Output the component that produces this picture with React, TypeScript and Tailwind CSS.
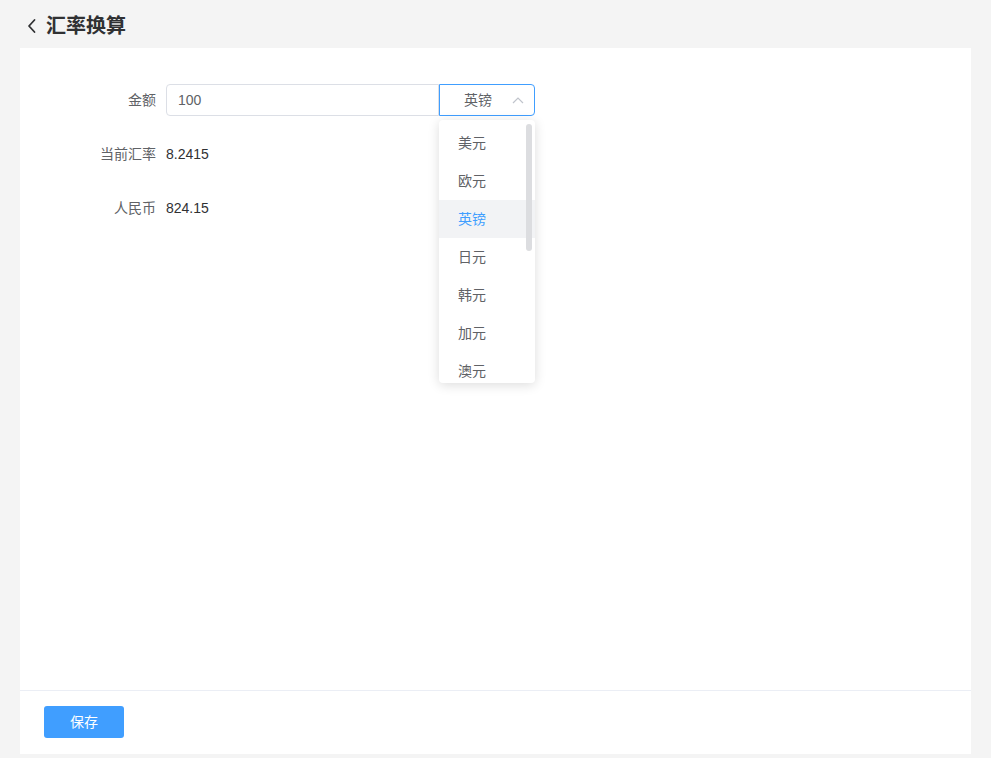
import React, { useState } from 'react';

const currencies = ['美元', '欧元', '英镑', '日元', '韩元', '加元', '澳元'];

const App: React.FC = () => {
  const [amount, setAmount] = useState('100');
  const [currency] = useState('英镑');
  const rate = 8.2415;

  return (
    <div
      className="h-[758px] bg-[#f4f4f4] flex flex-col overflow-hidden"
      style={{ fontFamily: '"Liberation Sans", "Noto Sans CJK SC", sans-serif' }}
    >
      {/* Header */}
      <div className="h-[48px] flex items-center pl-[26px] pt-[3px] shrink-0">
        <svg width="12" height="16" viewBox="0 0 12 16" className="mr-[8px]">
          <path d="M8.5 2 L3 8 L8.5 14" fill="none" stroke="#303133" strokeWidth="1.8" strokeLinecap="round" strokeLinejoin="round" />
        </svg>
        <h1 className="text-[20px] font-bold text-[#303133] leading-none">汇率换算</h1>
      </div>

      {/* Card */}
      <div className="mx-[20px] mb-[4px] flex-1 bg-white flex flex-col">
        <div className="flex-1 pt-[36px]">
          <div className="flex items-center h-[32px] mb-[22px]">
            <label className="w-[146px] pr-[10px] text-right text-[14px] text-[#606266]">金额</label>
            <div className="relative flex">
              <input
                value={amount}
                onChange={(e) => setAmount(e.target.value)}
                className="w-[273px] h-[32px] px-[11px] border border-[#dcdfe6] rounded-l-[4px] text-[14px] text-[#606266] outline-none"
              />
              <div className="w-[96px] h-[32px] border border-[#409eff] rounded-r-[4px] flex items-center pl-[24px] pr-[10px] text-[14px] text-[#606266] relative">
                <span className="flex-1">{currency}</span>
                <svg width="12" height="8" viewBox="0 0 12 8">
                  <path d="M1 7 L6 2 L11 7" fill="none" stroke="#c0c4cc" strokeWidth="1.2" />
                </svg>
              </div>

              {/* Dropdown */}
              <div className="absolute left-[273px] top-[36px] w-[96px] h-[263px] bg-white rounded-[4px] shadow-[0_2px_12px_rgba(0,0,0,0.14)] overflow-hidden z-10">
                <div className="pt-[4px]">
                  {currencies.map((c) => (
                    <div
                      key={c}
                      className={
                        c === currency
                          ? 'h-[38px] flex items-center pl-[19px] text-[14px] text-[#409eff] bg-[#f2f3f5]'
                          : 'h-[38px] flex items-center pl-[19px] text-[14px] text-[#606266]'
                      }
                    >
                      {c}
                    </div>
                  ))}
                </div>
                <div className="absolute right-[3px] top-[4px] w-[6px] h-[127px] rounded-full bg-[#dcdde0]" />
              </div>
            </div>
          </div>

          <div className="flex items-center h-[32px] mb-[22px]">
            <label className="w-[146px] pr-[10px] text-right text-[14px] text-[#606266]">当前汇率</label>
            <span className="text-[14px] text-[#303133]">{rate}</span>
          </div>

          <div className="flex items-center h-[32px]">
            <label className="w-[146px] pr-[10px] text-right text-[14px] text-[#606266]">人民币</label>
            <span className="text-[14px] text-[#303133]">{(Number(amount) * rate).toFixed(2)}</span>
          </div>
        </div>

        {/* Footer */}
        <div className="border-t border-[#ebeef5] h-[64px] flex items-start pt-[15px] pl-[24px] shrink-0">
          <button className="w-[80px] h-[32px] bg-[#409eff] text-white text-[14px] rounded-[3px]">保存</button>
        </div>
      </div>
    </div>
  );
};

export default App;
